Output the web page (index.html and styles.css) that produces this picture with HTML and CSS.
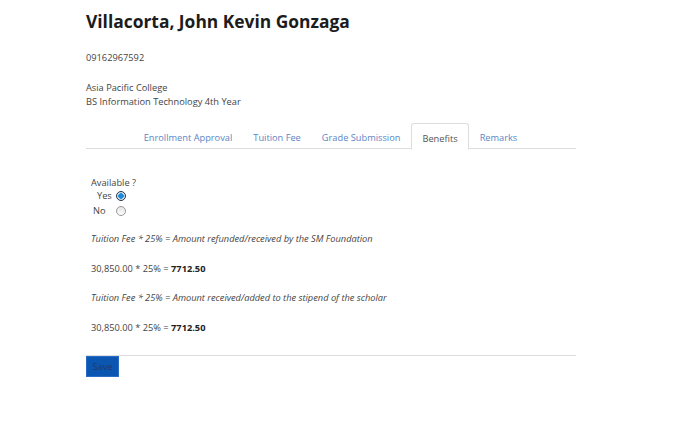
FILE: index.html
```html
<!DOCTYPE html>
<html>
<head>
<meta charset="utf-8">
<link rel="stylesheet" href="styles.css">
</head>
<body>
<div class="page">
  <h1 class="name">Villacorta, John Kevin Gonzaga</h1>
  <p class="phone">09162967592</p>
  <p class="school">Asia Pacific College<br>BS Information Technology 4th Year</p>
  <ul class="tabs">
    <li class="tab">Enrollment Approval</li>
    <li class="tab">Tuition Fee</li>
    <li class="tab">Grade Submission</li>
    <li class="tab active">Benefits</li>
    <li class="tab">Remarks</li>
  </ul>
  <div class="panel">
    <div class="avail">Available ?</div>
    <div class="opt opt-yes"><span class="lbl">Yes</span><span class="radio checked"></span></div>
    <div class="opt opt-no"><span class="lbl">No</span><span class="radio"></span></div>
    <p class="formula">Tuition Fee * 25% = Amount refunded/received by the SM Foundation</p>
    <p class="calc">30,850.00 * 25% = <b>7712.50</b></p>
    <p class="formula">Tuition Fee * 25% = Amount received/added to the stipend of the scholar</p>
    <p class="calc">30,850.00 * 25% = <b>7712.50</b></p>
  </div>
  <div class="footer">
    <button class="save">Save</button>
  </div>
</div>
</body>
</html>
```
FILE: styles.css
```css
html, body { margin: 0; padding: 0; background: #fff; }
body { font-family: "Open Sans", sans-serif; color: #333; }
.page { width: 490px; margin-left: 86px; padding-top: 9px; }
.name { margin: 0; font-size: 17.4px; font-weight: 700; color: #1c1c1c; line-height: 24px; }
.phone { margin: 18px 0 0; font-size: 9.25px; line-height: 14px; color: #444; }
.school { margin: 16px 0 0; font-size: 9.25px; line-height: 14px; color: #444; }
.tabs { list-style: none; margin: 14px 0 0; padding: 0; display: flex; justify-content: center; border-bottom: 1px solid #ddd; height: 25px; }
.tab { font-size: 9.25px; color: #5b86c5; padding: 5px 10px 0; line-height: 19px; margin-right: 1px; }
.tab.active { color: #555; border: 1px solid #ddd; border-bottom-color: #fff; border-radius: 3px 3px 0 0; height: 20px; padding-top: 5px; background: #fff; }
.panel { padding: 27px 5px 0; font-size: 9.25px; color: #444; }
.avail { line-height: 14px; }
.opt { display: flex; align-items: center; height: 15px; }
.opt-yes { margin-top: -2px; }
.opt-yes .lbl { margin-left: 6px; width: 19px; }
.opt-no .lbl { margin-left: 2px; width: 23px; }
.radio { width: 8px; height: 8px; border-radius: 50%; border: 1px solid #999; background: linear-gradient(#e4e4e4, #fff); }
.radio.checked { border-color: #234; background: radial-gradient(circle, #1e8ad6 0 2.5px, #cfe3f5 3px); }
.formula { font-style: italic; margin: 14px 0 0; line-height: 14px; }
.calc { margin: 16px 0 0; line-height: 14px; }
.formula + .calc ~ .formula { margin-top: 15px; }
.calc b { color: #222; }
.footer { margin-top: 20px; border-top: 1px solid #ddd; }
.save { display: block; margin: 0; border: 1px solid #2a6dc4; background: #0b56b1; color: #1f3a66; font-family: "Open Sans", sans-serif; font-size: 9.25px; width: 33px; height: 21px; padding: 0; }
```
